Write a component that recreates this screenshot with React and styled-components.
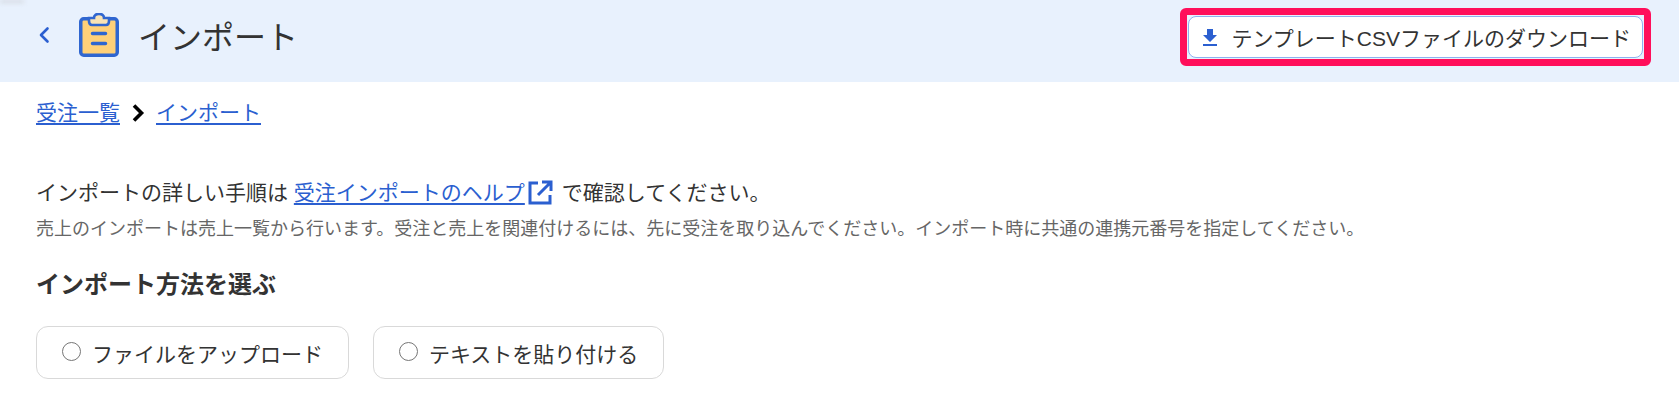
import React from 'react'
import styled, { createGlobalStyle } from 'styled-components'

const GlobalStyle = createGlobalStyle`
  html, body {
    margin: 0;
    padding: 0;
    background: #fff;
    font-family: "Liberation Sans", "Noto Sans CJK JP", sans-serif;
    color: #333;
  }
`

const Header = styled.header`
  position: relative;
  height: 82px;
  background: #e8f1fd;
  display: flex;
  align-items: center;
  justify-content: space-between;
  padding: 0 28px 8px 36px;
  box-sizing: border-box;

  &::before {
    content: '';
    position: absolute;
    top: 0;
    left: 0;
    width: 24px;
    height: 3px;
    background: #d5d9e0;
    filter: blur(2px);
  }
`

const TitleGroup = styled.div`
  display: flex;
  align-items: center;
  padding-bottom: 4px;
`

const BackLink = styled.a`
  display: flex;
  width: 43px;
  color: #2b5fd0;
`

const Title = styled.h1`
  margin: 0 0 0 19px;
  font-size: 32px;
  font-weight: 400;
  color: #333;
`

const Highlight = styled.div`
  border: 7px solid #ff0f5b;
  border-radius: 6px;
  background: #e8f1fd;
  padding: 1px;
`

const DownloadButton = styled.button`
  height: 42px;
  padding: 0 11px 0 14px;
  display: flex;
  align-items: center;
  gap: 14px;
  background: #fff;
  border: 1px solid #8db2f0;
  border-radius: 8px;
  font: inherit;
  font-size: 21px;
  color: #333;
`

const Main = styled.main`
  padding: 16px 36px 0;
`

const Crumbs = styled.nav`
  display: flex;
  align-items: center;
  gap: 11px;
  font-size: 21px;
  line-height: 30px;
`

const TextLink = styled.a`
  color: #2b5fd0;
  text-decoration: underline;
  text-underline-offset: 3px;
`

const Lead = styled.p`
  margin: 50px 0 0;
  font-size: 21px;
  line-height: 30px;
  display: flex;
  align-items: center;
  white-space: pre;
`

const ExternalIcon = styled.svg`
  margin: 0 9px 0 2px;
`

const Note = styled.p`
  margin: 9px 0 0;
  font-size: 18px;
  line-height: 24px;
  color: #666;
`

const Heading = styled.h2`
  margin: 26px 0 0;
  font-size: 24px;
  line-height: 36px;
  font-weight: 700;
  color: #333;
`

const Options = styled.div`
  display: flex;
  gap: 24px;
  margin-top: 23px;
`

const Option = styled.label`
  height: 53px;
  padding: 0 25px;
  display: flex;
  align-items: center;
  gap: 11px;
  border: 1px solid #d9d9d9;
  border-radius: 12px;
  font-size: 21px;
  box-sizing: border-box;
`

const Radio = styled.span`
  width: 19px;
  height: 19px;
  box-sizing: border-box;
  border: 1.5px solid #767676;
  border-radius: 50%;
  margin-bottom: 3px;
`

export default function App() {
  return (
    <>
      <GlobalStyle />
      <Header>
        <TitleGroup>
          <BackLink>
            <svg width="16" height="18" viewBox="0 0 16 18" fill="none" stroke="currentColor" strokeWidth="2.6" strokeLinecap="round" strokeLinejoin="round">
              <path d="M11.5 2.5 5 9l6.5 6.5" />
            </svg>
          </BackLink>
          <svg width="40" height="44" viewBox="0 0 40 44">
            <rect x="1.750" y="5.750" width="36.500" height="36.500" rx="3" fill="#ffd078" stroke="#2f66d0" strokeWidth="3.500" />
            <path d="M10 5h5c0-5.500 10-5.500 10 0h5v3c0 2.500-1 4-3 4H13c-2 0-3-1.500-3-4z" fill="#f9e3b4" stroke="#2f66d0" strokeWidth="2.6" />
            <path d="M13.500 20.500h13M13.500 30.500h13" stroke="#2f66d0" strokeWidth="3.500" strokeLinecap="round" />
          </svg>
          <Title>インポート</Title>
        </TitleGroup>
        <Highlight>
          <DownloadButton>
            <svg width="14" height="17" viewBox="0 0 14 17" fill="#2b5fd0">
              <path d="M4 0h6v6h4l-7 7-7-7h4zM0 15h14v2H0z" />
            </svg>
            テンプレートCSVファイルのダウンロード
          </DownloadButton>
        </Highlight>
      </Header>
      <Main>
        <Crumbs>
          <TextLink>受注一覧</TextLink>
          <svg width="14" height="18" viewBox="0 0 14 18" fill="none" stroke="#000" strokeWidth="3.6">
            <path d="M3 1.500l7.500 7.500-7.500 7.500" />
          </svg>
          <TextLink>インポート</TextLink>
        </Crumbs>
        <Lead>
          インポートの詳しい手順は <TextLink>受注インポートのヘルプ</TextLink>
          <ExternalIcon width="26" height="26" viewBox="0 0 26 26" fill="none" stroke="#2b5fd0" strokeWidth="3">
            <path d="M11 3H3v20h20v-8M15 2h9v9M24 2 11 15" />
          </ExternalIcon>
          で確認してください。
        </Lead>
        <Note>売上のインポートは売上一覧から行います。受注と売上を関連付けるには、先に受注を取り込んでください。インポート時に共通の連携元番号を指定してください。</Note>
        <Heading>インポート方法を選ぶ</Heading>
        <Options>
          <Option><Radio />ファイルをアップロード</Option>
          <Option><Radio />テキストを貼り付ける</Option>
        </Options>
      </Main>
    </>
  )
}
